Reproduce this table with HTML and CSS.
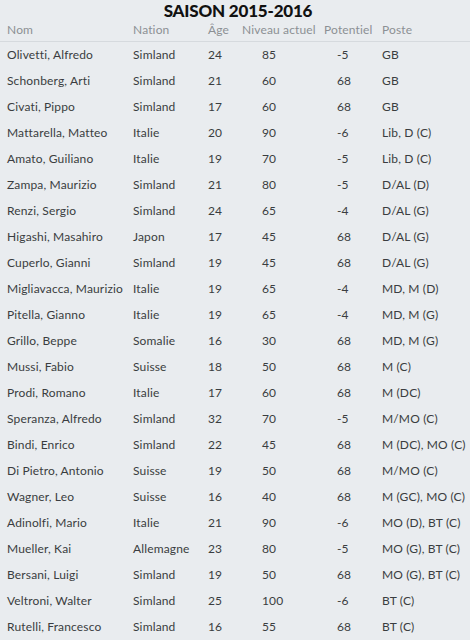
FILE: index.html
```html
<!DOCTYPE html>
<html lang="fr">
<head>
<meta charset="utf-8">
<link rel="stylesheet" href="styles.css">
</head>
<body>
<div class="page">
  <h1 class="title">SAISON 2015-2016</h1>
  <div class="row head">
    <span>Nom</span><span>Nation</span><span>Âge</span><span>Niveau actuel</span><span>Potentiel</span><span>Poste</span>
  </div>
  <div class="row"><span>Olivetti, Alfredo</span><span>Simland</span><span>24</span><span class="ca">85</span><span class="pa">-5</span><span>GB</span></div>
  <div class="row"><span>Schonberg, Arti</span><span>Simland</span><span>21</span><span class="ca">60</span><span class="pa">68</span><span>GB</span></div>
  <div class="row"><span>Civati, Pippo</span><span>Simland</span><span>17</span><span class="ca">60</span><span class="pa">68</span><span>GB</span></div>
  <div class="row"><span>Mattarella, Matteo</span><span>Italie</span><span>20</span><span class="ca">90</span><span class="pa">-6</span><span>Lib, D (C)</span></div>
  <div class="row"><span>Amato, Guiliano</span><span>Italie</span><span>19</span><span class="ca">70</span><span class="pa">-5</span><span>Lib, D (C)</span></div>
  <div class="row"><span>Zampa, Maurizio</span><span>Simland</span><span>21</span><span class="ca">80</span><span class="pa">-5</span><span>D/AL (D)</span></div>
  <div class="row"><span>Renzi, Sergio</span><span>Simland</span><span>24</span><span class="ca">65</span><span class="pa">-4</span><span>D/AL (G)</span></div>
  <div class="row"><span>Higashi, Masahiro</span><span>Japon</span><span>17</span><span class="ca">45</span><span class="pa">68</span><span>D/AL (G)</span></div>
  <div class="row"><span>Cuperlo, Gianni</span><span>Simland</span><span>19</span><span class="ca">45</span><span class="pa">68</span><span>D/AL (G)</span></div>
  <div class="row"><span>Migliavacca, Maurizio</span><span>Italie</span><span>19</span><span class="ca">65</span><span class="pa">-4</span><span>MD, M (D)</span></div>
  <div class="row"><span>Pitella, Gianno</span><span>Italie</span><span>19</span><span class="ca">65</span><span class="pa">-4</span><span>MD, M (G)</span></div>
  <div class="row"><span>Grillo, Beppe</span><span>Somalie</span><span>16</span><span class="ca">30</span><span class="pa">68</span><span>MD, M (G)</span></div>
  <div class="row"><span>Mussi, Fabio</span><span>Suisse</span><span>18</span><span class="ca">50</span><span class="pa">68</span><span>M (C)</span></div>
  <div class="row"><span>Prodi, Romano</span><span>Italie</span><span>17</span><span class="ca">60</span><span class="pa">68</span><span>M (DC)</span></div>
  <div class="row"><span>Speranza, Alfredo</span><span>Simland</span><span>32</span><span class="ca">70</span><span class="pa">-5</span><span>M/MO (C)</span></div>
  <div class="row"><span>Bindi, Enrico</span><span>Simland</span><span>22</span><span class="ca">45</span><span class="pa">68</span><span>M (DC), MO (C)</span></div>
  <div class="row"><span>Di Pietro, Antonio</span><span>Suisse</span><span>19</span><span class="ca">50</span><span class="pa">68</span><span>M/MO (C)</span></div>
  <div class="row"><span>Wagner, Leo</span><span>Suisse</span><span>16</span><span class="ca">40</span><span class="pa">68</span><span>M (GC), MO (C)</span></div>
  <div class="row"><span>Adinolfi, Mario</span><span>Italie</span><span>21</span><span class="ca">90</span><span class="pa">-6</span><span>MO (D), BT (C)</span></div>
  <div class="row"><span>Mueller, Kai</span><span>Allemagne</span><span>23</span><span class="ca">80</span><span class="pa">-5</span><span>MO (G), BT (C)</span></div>
  <div class="row"><span>Bersani, Luigi</span><span>Simland</span><span>19</span><span class="ca">50</span><span class="pa">68</span><span>MO (G), BT (C)</span></div>
  <div class="row"><span>Veltroni, Walter</span><span>Simland</span><span>25</span><span class="ca">100</span><span class="pa">-6</span><span>BT (C)</span></div>
  <div class="row"><span>Rutelli, Francesco</span><span>Simland</span><span>16</span><span class="ca">55</span><span class="pa">68</span><span>BT (C)</span></div>
</div>
</body>
</html>
```

FILE: styles.css
```css
html, body {
  margin: 0;
  padding: 0;
  background: #e9ecef;
}
.page {
  width: 470px;
  height: 640px;
  overflow: hidden;
  font-family: "Lato", "Liberation Sans", sans-serif;
  color: #3a3d40;
}
.title {
  margin: 0;
  height: 22px;
  line-height: 22px;
  text-align: center;
  font-size: 17px;
  font-weight: 900;
  color: #111;
  letter-spacing: -0.2px;
  padding-left: 6px;
}
.row {
  display: grid;
  grid-template-columns: 126px 75px 34px 82px 58px 1fr;
  padding-left: 7px;
  height: 26px;
  line-height: 26px;
  font-size: 12px;
  letter-spacing: 0.15px;
  white-space: nowrap;
}
.row.head {
  height: 19px;
  line-height: 15px;
  color: #8c9094;
  border-bottom: 1px solid #d6dade;
}
.ca { padding-left: 20px; }
.pa { padding-left: 13px; }
```
